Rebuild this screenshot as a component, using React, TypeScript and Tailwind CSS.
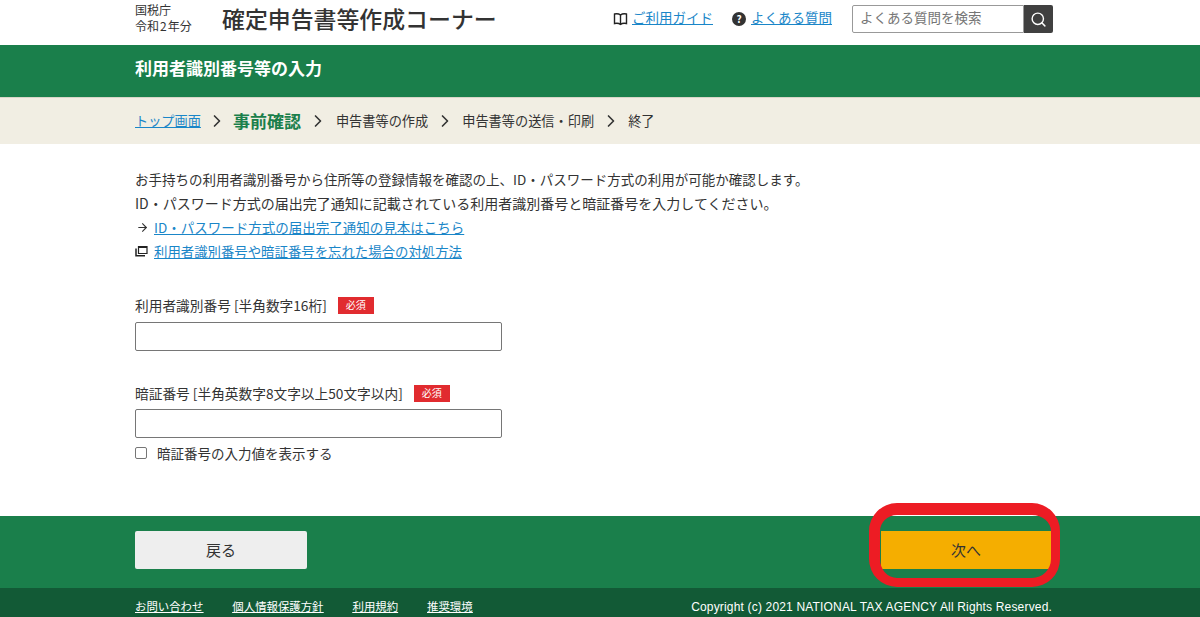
import { ArrowRight, ChevronRight, Search } from "lucide-react"

const font = "font-['Noto_Sans_CJK_JP','Noto_Sans',sans-serif]"

function BookIcon() {
  return (
    <svg width="15" height="14" viewBox="0 0 15 14" fill="none" stroke="#222" strokeWidth="1.4">
      <path d="M7.5 3 C6 1.8 3.5 1.6 1.5 2 V11.5 C3.5 11 6 11.2 7.5 12.4 C9 11.2 11.5 11 13.5 11.5 V2 C11.5 1.6 9 1.8 7.5 3 Z" />
      <path d="M7.5 3 V12.4" />
    </svg>
  )
}

function WindowIcon() {
  return (
    <svg width="13" height="12" viewBox="0 0 13 12" fill="none" stroke="#222">
      <path d="M3.5 1.5 H12 V8.5 H3.5 Z" strokeWidth="1.2" />
      <path d="M3.5 2 H12" strokeWidth="2" />
      <path d="M1 3.5 V10.8 H10" strokeWidth="1.5" />
    </svg>
  )
}

function Required() {
  return (
    <span className="ml-[11px] inline-flex h-[17px] w-[36px] items-center justify-center bg-[#e12b2f] text-[10px] leading-none text-white">
      必須
    </span>
  )
}

function Chevron({ className = "mx-[7px]" }: { className?: string }) {
  return <ChevronRight size={20} color="#333" strokeWidth={2} className={className} />
}

export default function App() {
  return (
    <div className={`relative h-[617px] w-[1200px] overflow-hidden bg-white text-[13.5px] text-[#333] ${font}`}>
      {/* Header */}
      <header className="flex h-[45px] items-start pl-[135px] pr-[147px]">
        <div className="mt-[2px] w-[87px] text-[12px] leading-[16px]">
          <div>国税庁</div>
          <div>令和<span className="px-[1px]">2</span>年分</div>
        </div>
        <h1 className="mt-[6px] text-[22.9px] font-medium leading-[24px]">確定申告書等作成コーナー</h1>
        <div className="ml-auto mt-[5px] flex h-[28px] items-center">
          <span className="flex pb-[1px]"><BookIcon /></span>
          <a className="ml-[4px] pb-[3px] text-[#1a86c8] underline">ご利用ガイド</a>
          <span className="mb-[1px] ml-[19px] flex h-[14px] w-[14px] items-center justify-center rounded-full bg-[#333] text-[10px] font-bold leading-none text-white">?</span>
          <a className="ml-[5px] pb-[3px] text-[#1a86c8] underline">よくある質問</a>
          <div className="ml-[20px] flex h-[28px] w-[201px]">
            <div className="flex flex-1 items-center rounded-l-[2px] border border-[#999] pb-[3px] pl-[7px] text-[#757575]">よくある質問を検索</div>
            <button className="flex w-[29px] items-center justify-center rounded-r-[2px] bg-[#404040]">
              <Search size={17} color="#fff" strokeWidth={2} />
            </button>
          </div>
        </div>
      </header>

      {/* Page title */}
      <div className="flex h-[52px] items-center bg-[#1a7f4b] pb-[7px] pl-[135px] text-[17px] font-bold text-white">
        利用者識別番号等の入力
      </div>

      {/* Breadcrumb */}
      <nav className="flex h-[47px] items-center border-t border-[#d9d6c8] bg-[#f1eee3] pl-[135px] text-[13.2px]">
        <a className="text-[#1a86c8] underline">トップ画面</a>
        <Chevron className="mx-[6px]" />
        <span className="text-[17px] font-bold text-[#1a7f4b]">事前確認</span>
        <Chevron className="ml-[7px] mr-[8px]" />
        <span>申告書等の作成</span>
        <Chevron />
        <span>申告書等の送信・印刷</span>
        <Chevron />
        <span>終了</span>
      </nav>

      {/* Content */}
      <main className="h-[372px] pl-[135px] pr-[147px] pt-[23px]">
        <p className="leading-[24px]">お手持ちの利用者識別番号から住所等の登録情報を確認の上、ID・パスワード方式の利用が可能か確認します。</p>
        <p className="text-[14px] leading-[24px]">ID・パスワード方式の届出完了通知に記載されている利用者識別番号と暗証番号を入力してください。</p>
        <div className="flex items-center leading-[24px]">
          <span className="w-[19px] pl-[1px]"><ArrowRight size={13} strokeWidth={2} /></span>
          <a className="text-[#1a86c8] underline">ID・パスワード方式の届出完了通知の見本はこちら</a>
        </div>
        <div className="flex items-center leading-[24px]">
          <span className="flex w-[19px] items-center"><WindowIcon /></span>
          <a className="text-[13.4px] text-[#1a86c8] underline">利用者識別番号や暗証番号を忘れた場合の対処方法</a>
        </div>

        <div className="mt-[30px] flex h-[24px] items-center text-[13.7px]">
          <span>利用者識別番号 [半角数字16桁]</span>
          <Required />
        </div>
        <div className="mt-[5px] h-[29px] w-[367px] rounded-[2px] border border-[#767676]" />

        <div className="mt-[30px] flex h-[24px] items-center text-[13.7px]">
          <span>暗証番号 [半角英数字8文字以上50文字以内]</span>
          <Required />
        </div>
        <div className="mt-[4px] h-[29px] w-[367px] rounded-[2px] border border-[#767676]" />

        <label className="mt-[3px] flex h-[24px] items-center">
          <span className="h-[12px] w-[12px] rounded-[2px] border border-[#767676]" />
          <span className="ml-[10px]">暗証番号の入力値を表示する</span>
        </label>
      </main>

      {/* Action bar */}
      <div className="flex h-[72px] items-center justify-between bg-[#1a7f4b] pb-[4px] pl-[135px] pr-[149px]">
        <button className="h-[38px] w-[172px] rounded-[2px] bg-[#eeeeee] text-[15px] text-[#333]">戻る</button>
        <button className="h-[38px] w-[170px] bg-[#f5ae00] text-[15px] text-[#333]">次へ</button>
      </div>

      {/* Footer */}
      <footer className="flex h-[29px] items-center justify-between bg-[#125a36] pl-[135px] pr-[148px] pt-[9px] text-[11.4px] text-white">
        <div className="flex gap-[29px] underline">
          <a>お問い合わせ</a>
          <a>個人情報保護方針</a>
          <a>利用規約</a>
          <a>推奨環境</a>
        </div>
        <span className="font-['Liberation_Sans',sans-serif] text-[12px] tracking-[0.17px]">Copyright (c) 2021 NATIONAL TAX AGENCY All Rights Reserved.</span>
      </footer>

      {/* Red annotation around the next button */}
      <div className="absolute left-[869px] top-[503px] h-[84px] w-[191px] rounded-[28px] border-b-[9px] border-l-[11px] border-r-[9px] border-t-[12px] border-[#ed1c24]" />
    </div>
  )
}
